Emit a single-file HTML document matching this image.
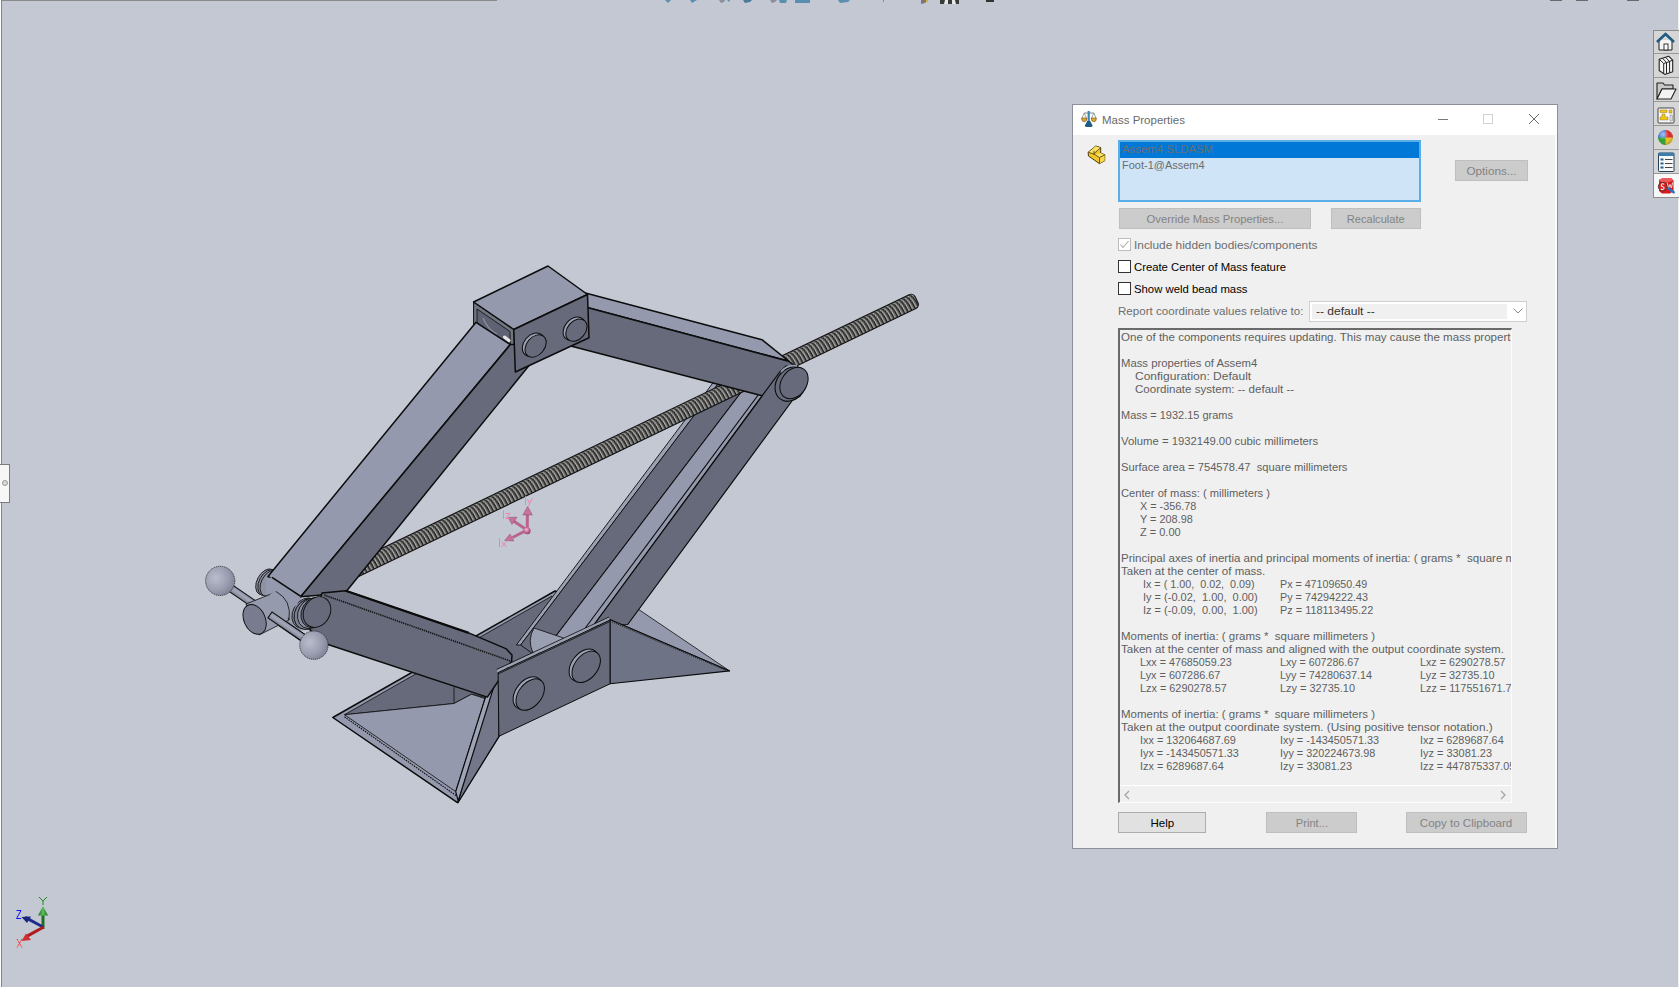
<!DOCTYPE html>
<html><head><meta charset="utf-8">
<style>
*{margin:0;padding:0;box-sizing:border-box}
html,body{width:1679px;height:987px;overflow:hidden;background:#c4c8d3;font-family:"Liberation Sans",sans-serif;position:relative}
.a{position:absolute}
.t{font-size:11px;color:#000;white-space:pre;line-height:13px;position:absolute;transform-origin:0 50%}
.m{color:#5f5f5f}
.cb{width:13px;height:13px;border:1px solid #333;background:#fff}
</style></head>
<body>
<!-- viewport decorations -->
<div class="a" style="left:0;top:0;width:497px;height:1px;background:#8a8a8a"></div>
<div class="a" style="left:0;top:0;width:1px;height:987px;background:#ffffff"></div>
<div class="a" style="left:1px;top:0;width:1px;height:987px;background:#858585"></div>
<div class="a" style="left:0;top:464px;width:10px;height:39px;background:#f7f7f7;border:1px solid #7c7c7c;border-left:none"></div>
<div class="a" style="left:2px;top:480px;width:6px;height:6px;border-radius:50%;background:#dadada;border:1px solid #999"></div>
<!-- top toolbar fragments -->
<svg class="a" style="left:0;top:0" width="1679" height="6" viewBox="0 0 1679 6">
 <path d="M665,0 L671,0 L668,3 Z" fill="#5b8fb0"/>
 <path d="M690,0 L697,0 L692,3 Z" fill="#5b8fb0"/>
 <path d="M719,0 L725,0 L724,2 L721,3 Z" fill="#8a8f99"/><path d="M727,0 L730,0 L729,2 Z" fill="#5b8fb0"/>
 <path d="M743,0 L752,0 L750,2 L745,3 Z" fill="#4a7a9c"/>
 <path d="M770,0 L777,0 L775,2 L772,3 Z" fill="#8a8f99"/><path d="M779,0 L787,0 L786,3 L780,3 Z" fill="#5b8fb0"/>
 <rect x="795" y="0" width="15" height="3" fill="#5a8db0"/>
 <path d="M838,0 L850,0 L848,2 L840,3 Z" fill="#5b8fb0"/>
 <rect x="883" y="0" width="1" height="2" fill="#888"/>
 <path d="M921,0 L928,0 L925,3 L921,4 Z" fill="#777"/><rect x="926" y="0" width="2" height="2" fill="#e0b020"/>
 <rect x="940" y="0" width="19" height="4" fill="#3a3a3a"/><path d="M945,0 L948,0 L948,4 L944,4 Z M952,0 L955,0 L956,4 L952,4 Z" fill="#e8e8e8"/>
 <rect x="986" y="0" width="8" height="2" fill="#333"/>
 <rect x="1550" y="0" width="12" height="1" fill="#6a6a6a"/>
 <rect x="1576" y="0" width="12" height="1" fill="#6a6a6a"/>
 <rect x="1627" y="0" width="12" height="1" fill="#6a6a6a"/>
</svg>
<!-- right task pane -->
<div class="a" style="left:1653px;top:30px;width:26px;height:168px;background:#d6d6d6;border:1px solid #8c8c8c;border-right:none"></div>
<div class="a" style="left:1654px;top:174px;width:25px;height:23px;background:#f7f7f7"></div>
<div class="a" style="left:1654px;top:53px;width:25px;height:1px;background:#9a9a9a"></div>
<div class="a" style="left:1654px;top:77px;width:25px;height:1px;background:#9a9a9a"></div>
<div class="a" style="left:1654px;top:101px;width:25px;height:1px;background:#9a9a9a"></div>
<div class="a" style="left:1654px;top:125px;width:25px;height:1px;background:#9a9a9a"></div>
<div class="a" style="left:1654px;top:149px;width:25px;height:1px;background:#9a9a9a"></div>
<div class="a" style="left:1654px;top:173px;width:25px;height:1px;background:#9a9a9a"></div>
<div class="a" style="left:1678px;top:0;width:1px;height:30px;background:#f0f0f0"></div>
<div class="a" style="left:1678px;top:198px;width:1px;height:789px;background:#f0f0f0"></div>
<svg class="a" style="left:1654px;top:30px" width="25" height="168" viewBox="0 0 25 168">
 <!-- home -->
 <path d="M5,10 L5,20 L18,20 L18,10" fill="#f4f4f4" stroke="#222" stroke-width="1"/>
 <rect x="10" y="14" width="4" height="6" fill="#fff" stroke="#222" stroke-width="0.9"/>
 <path d="M3,12 L11.5,4 L20,12" fill="none" stroke="#1d5a80" stroke-width="2.6"/>
 <!-- library books -->
 <path d="M5.2,29.2 L5.2,40.5 L10.7,44.4 L18.7,41.8 L18.7,30.1 L14.6,26.2 Z" fill="#f4f4f4" stroke="#222" stroke-width="1.1" stroke-linejoin="round"/>
 <path d="M9.7,33.5 L9.7,44 M12.5,32.5 L12.5,43.5 M15.6,31.5 L15.6,42.5 M5.2,29.2 L9.7,33.5 M8.5,28.2 L12.5,32.5 M11.5,27.2 L15.6,31.5 M9.7,33.5 L12.5,32.5 L15.6,31.5 L18.7,30.1" fill="none" stroke="#222" stroke-width="1"/>
 <!-- folder -->
 <path d="M3,69 L3,53 L9,53 L10.5,55 L19,55 L19,59 L8,59 Z" fill="#c8c8c8" stroke="#222" stroke-width="1.1" stroke-linejoin="round"/>
 <path d="M3,69 L8,59 L22,59 L17,69 Z" fill="#f3f3f3" stroke="#222" stroke-width="1.1" stroke-linejoin="round"/>
 <!-- design card yellow -->
 <rect x="4" y="78" width="16" height="15" rx="1" fill="#f8f8f8" stroke="#333" stroke-width="0.9"/>
 <rect x="6" y="80" width="7" height="2.5" fill="#f2c81e" stroke="#7a5c00" stroke-width="0.4"/>
 <rect x="15" y="80" width="3" height="3" fill="#f2c81e" stroke="#7a5c00" stroke-width="0.4"/>
 <path d="M8,84 L11,84 L11,87 L14,87 L14,90 L6,90 L6,87 L8,87 Z" fill="#f2c81e" stroke="#7a5c00" stroke-width="0.4"/>
 <rect x="16" y="85" width="2.5" height="6" fill="#ddd" stroke="#666" stroke-width="0.4"/>
 <!-- appearance ball -->
 <defs><clipPath id="bc"><circle cx="11.5" cy="107.5" r="7.5"/></clipPath>
 <radialGradient id="bsh" cx="0.35" cy="0.3" r="0.8"><stop offset="0" stop-color="#fff" stop-opacity="0.6"/><stop offset="0.5" stop-color="#fff" stop-opacity="0"/><stop offset="1" stop-color="#000" stop-opacity="0.35"/></radialGradient></defs>
 <g clip-path="url(#bc)">
  <rect x="3" y="99" width="9" height="9" fill="#2e6fd8"/>
  <rect x="11.5" y="99" width="9" height="9" fill="#d8262a"/>
  <rect x="3" y="107.5" width="9" height="9" fill="#2aa02a"/>
  <rect x="11.5" y="107.5" width="9" height="9" fill="#e8c020"/>
  <circle cx="11.5" cy="107.5" r="7.5" fill="url(#bsh)"/>
 </g>
 <!-- custom properties list -->
 <rect x="4.5" y="123" width="15.5" height="18.5" rx="0.8" fill="#f8f8f8" stroke="#1e3e5a" stroke-width="1"/>
 <rect x="4.5" y="123" width="15.5" height="3" fill="#3b7fb0"/>
 <rect x="6.5" y="128.5" width="3" height="2" fill="#2b5f88"/><rect x="6.5" y="132.5" width="3" height="2" fill="#2b5f88"/><rect x="6.5" y="136.5" width="3" height="2" fill="#2b5f88"/>
 <path d="M11,129.5 L18.5,129.5 M11,133.5 L18.5,133.5 M11,137.5 L18.5,137.5" stroke="#333" stroke-width="0.9"/>
 <!-- sw resources -->
 <path d="M5,150 L9,148 L17,148 L19.5,150.5 L19.5,161 L16,163.5 L8,163.5 L5,161 Z" fill="#d41c1c"/>
 <path d="M5,150 L9,148 L17,148 L19.5,150.5 L15,152 L7,152 Z" fill="#ea5a5a"/>
 <circle cx="8.6" cy="156.6" r="4.3" fill="#e01e1e" stroke="#3a3a3a" stroke-width="0.8"/>
 <path d="M10.2,154.2 Q8,153 7.3,155 Q7.2,156.5 8.8,156.8 Q10.4,157.3 9.8,158.8 Q8.8,160.2 6.8,159" fill="none" stroke="#f4f4f4" stroke-width="1.1"/>
 <path d="M13.2,152.5 L14.6,158 L16,154.5 L17.4,158 L18.6,152.5" fill="none" stroke="#e8e8e8" stroke-width="0.9"/>
 <path d="M14.5,158.5 L19.6,162.2" stroke="#2d6fc0" stroke-width="2.6" stroke-linecap="round"/>
</svg>
<!-- triad -->
<svg class="a" style="left:10px;top:890px" width="50" height="62" viewBox="10 890 50 62">
 <defs><linearGradient id="gy" x1="0" x2="1"><stop offset="0" stop-color="#1d6a1d"/><stop offset="0.5" stop-color="#5cc05c"/><stop offset="1" stop-color="#1d6a1d"/></linearGradient></defs>
 <path d="M41.5,929 L41.5,914 L44.5,914 L44.5,929 Z" fill="#1f6f1f"/>
 <path d="M38,915.5 L43,906 L48,915.5 Z" fill="url(#gy)"/>
 <path d="M42,928 L24,918.5 L26,916 L44,926 Z" fill="#1e2a8a"/>
 <path d="M21.5,917 L31,916.5 L27,923 Z" fill="#1a2580"/>
 <path d="M44,928.5 L27,938 L25,935.5 L42.5,926 Z" fill="#b01c1c"/>
 <path d="M21.5,941 L26,933.5 L31,940 Z" fill="#d03030"/>
 <path d="M39,897 L43,901 L47,897 M43,901 L43,905" fill="none" stroke="#1a8a1a" stroke-width="1"/>
 <path d="M16.5,910.5 L21,910.5 L16.5,918.5 L21,918.5" fill="none" stroke="#1010ff" stroke-width="1"/>
 <path d="M17,939 L22,947.5 M22,939 L17,947.5" fill="none" stroke="#ff1a1a" stroke-width="1" stroke-dasharray="1.2,0.6"/>
</svg>

<svg class="a" style="left:0;top:0" width="1679" height="987" viewBox="0 0 1679 987">
<polygon points="332.8,717.5 555.0,591.0 580.0,600.0 497.2,672.0 499.0,736.3 457.5,802.6" fill="#9499ad" stroke="#0c0c0c" stroke-width="1.5" stroke-linejoin="round" />
<polygon points="344.5,714.7 552.0,596.0 560.0,620.0 497.0,660.0 486.0,697.7 471.5,694.2 454.0,703.5" fill="#666a7a" stroke="#0c0c0c" stroke-width="0.8" stroke-linejoin="round" />
<line x1="454.0" y1="687.2" x2="454.0" y2="703.5" stroke="#0c0c0c" stroke-width="0.8" />
<polygon points="344.5,714.7 454.0,703.5 471.5,694.2 485.0,698.6 455.7,791.6" fill="#9499ad" stroke="#0c0c0c" stroke-width="0.8" stroke-linejoin="round" />
<polyline points="344.5,716.8 456.0,795.5" fill="none" stroke="#111" stroke-width="1.2" stroke-dasharray="1.5,1"/>
<polygon points="492.0,672.0 499.0,672.6 499.0,736.3 458.0,802.6" fill="#737789" stroke="#0c0c0c" stroke-width="1.2" stroke-linejoin="round" />
<polygon points="492.9,673.6 497.9,673.6 458.2,801.0 455.7,791.6" fill="#9ea3b6" stroke="#0c0c0c" stroke-width="1.2" stroke-linejoin="round" />
<polygon points="600.0,604.0 637.5,608.7 729.6,670.9 610.0,619.6" fill="#9499ad" stroke="#0c0c0c" stroke-width="0.8" stroke-linejoin="round" />
<polygon points="495.0,655.0 600.0,610.0 610.0,640.0 500.0,690.0" fill="#666a7a" stroke="#0c0c0c" stroke-width="0" stroke-linejoin="round" />
<polygon points="722.6,370.0 728.5,370.0 520.6,645.0 516.4,645.0" fill="#9ba0b3" stroke="#0c0c0c" stroke-width="0.9" stroke-linejoin="round" />
<polygon points="728.5,370.0 758.0,370.0 557.4,634.0 532.8,653.7 520.6,645.0" fill="#666a7a" stroke="#0c0c0c" stroke-width="0.9" stroke-linejoin="round" />
<polygon points="758.0,370.0 781.1,370.0 568.1,660.0 537.6,660.0" fill="#9499ad" stroke="#0c0c0c" stroke-width="1.1" stroke-linejoin="round" />
<line x1="776.7" y1="370.0" x2="585.3" y2="628.0" stroke="#0c0c0c" stroke-width="1.1" />
<path d="M534,628 L563.3,637.9 L556,652 L533,653 Q527,640 534,628 Z" fill="#9a9fb2" stroke="#0c0c0c" stroke-width="0.8"/>
<defs><pattern id="thr" x="0" y="-7.7" width="3.9" height="15.4" patternUnits="userSpaceOnUse"><rect width="3.9" height="15.4" fill="#5a5a5a"/><path d="M-11.70,-0.5 Q-6.20,-0.5 -6.20,15.9" fill="none" stroke="#1a1a1a" stroke-width="1.35"/><path d="M-10.45,-0.5 Q-4.95,-0.5 -4.95,15.9" fill="none" stroke="#b8b8b4" stroke-width="1.2"/><path d="M-7.80,-0.5 Q-2.30,-0.5 -2.30,15.9" fill="none" stroke="#1a1a1a" stroke-width="1.35"/><path d="M-6.55,-0.5 Q-1.05,-0.5 -1.05,15.9" fill="none" stroke="#b8b8b4" stroke-width="1.2"/><path d="M-3.90,-0.5 Q1.60,-0.5 1.60,15.9" fill="none" stroke="#1a1a1a" stroke-width="1.35"/><path d="M-2.65,-0.5 Q2.85,-0.5 2.85,15.9" fill="none" stroke="#b8b8b4" stroke-width="1.2"/><path d="M0.00,-0.5 Q5.50,-0.5 5.50,15.9" fill="none" stroke="#1a1a1a" stroke-width="1.35"/><path d="M1.25,-0.5 Q6.75,-0.5 6.75,15.9" fill="none" stroke="#b8b8b4" stroke-width="1.2"/><path d="M3.90,-0.5 Q9.40,-0.5 9.40,15.9" fill="none" stroke="#1a1a1a" stroke-width="1.35"/><path d="M5.15,-0.5 Q10.65,-0.5 10.65,15.9" fill="none" stroke="#b8b8b4" stroke-width="1.2"/></pattern></defs>
<g transform="translate(345.0,574.6) rotate(-25.69)"><rect x="0" y="-7.7" width="634.2" height="15.4" rx="4.5" fill="url(#thr)" stroke="#111" stroke-width="1.1"/></g>
<polygon points="575.0,290.3 762.0,339.7 764.7,341.9 788.5,361.0 575.0,304.2" fill="#9499ad" stroke="#0c0c0c" stroke-width="1.5" stroke-linejoin="round" />
<polygon points="575.0,304.2 788.5,361.2 803.0,372.0 800.0,396.0 790.0,401.0 759.2,395.0 571.6,346.2" fill="#666a7a" stroke="#0c0c0c" stroke-width="1.5" stroke-linejoin="round" />
<polygon points="779.7,372.0 786.0,366.0 800.0,368.0 806.0,380.0 796.4,395.0 627.7,624.5 593.1,626.0" fill="#666a7a" stroke="#0c0c0c" stroke-width="1.2" stroke-linejoin="round" />
<ellipse cx="791" cy="384" rx="14.5" ry="18.5" transform="rotate(35 791 384)" fill="#666a7a" stroke="#0c0c0c" stroke-width="1.1"/>
<ellipse cx="794" cy="383" rx="12.5" ry="17" transform="rotate(35 794 383)" fill="#666a7a" stroke="#0c0c0c" stroke-width="1"/>
<path d="M781,372 Q787,364 797,366" fill="none" stroke="#9ba0b3" stroke-width="1.6"/>
<polygon points="610.0,619.6 729.6,670.9 610.0,683.8" fill="#6f7386" stroke="#0c0c0c" stroke-width="1.1" stroke-linejoin="round" />
<polyline points="612.0,621.8 726.0,670.4" fill="none" stroke="#222" stroke-width="1" stroke-dasharray="1.2,1"/>
<polygon points="473.6,302.0 513.8,329.5 515.3,372.0 473.6,346.0" fill="#70747f" stroke="#0c0c0c" stroke-width="1" stroke-linejoin="round" />
<polygon points="477.0,309.0 510.0,331.5 511.0,367.0 477.0,345.0" fill="#5e6272" stroke="#0c0c0c" stroke-width="0.8" stroke-linejoin="round" />
<path d="M483,318 Q488,330 497,334" fill="none" stroke="#8d92a3" stroke-width="1.2"/>
<path d="M504.5,337 L509,340.5" stroke="#e6e6e6" stroke-width="3" stroke-linecap="round"/>
<ellipse cx="266" cy="582.0" rx="9" ry="14" transform="rotate(28 266 582)" fill="#8d92a5" stroke="#0c0c0c" stroke-width="0.8"/>
<ellipse cx="268.5" cy="582.75" rx="9" ry="14" transform="rotate(28 268.5 582)" fill="#8d92a5" stroke="#0c0c0c" stroke-width="0.8"/>
<ellipse cx="271" cy="583.5" rx="9" ry="14" transform="rotate(28 271 582)" fill="#8d92a5" stroke="#0c0c0c" stroke-width="0.8"/>
<polygon points="284.0,596.0 301.0,597.0 306.0,630.0 288.0,632.0" fill="#959aad" stroke="#0c0c0c" stroke-width="0" stroke-linejoin="round" />
<ellipse cx="305" cy="613.0" rx="12" ry="16" transform="rotate(30 305 613)" fill="#8d92a5" stroke="#0c0c0c" stroke-width="0.8"/>
<ellipse cx="307.5" cy="613.5" rx="12" ry="16" transform="rotate(30 307.5 613)" fill="#8d92a5" stroke="#0c0c0c" stroke-width="0.8"/>
<ellipse cx="310" cy="614.0" rx="12" ry="16" transform="rotate(30 310 613)" fill="#8d92a5" stroke="#0c0c0c" stroke-width="0.8"/>
<ellipse cx="312.5" cy="614.5" rx="12" ry="16" transform="rotate(30 312.5 613)" fill="#8d92a5" stroke="#0c0c0c" stroke-width="0.8"/>
<polygon points="476.0,322.3 510.3,344.6 300.7,596.7 268.0,576.5" fill="#9499ad" stroke="#0c0c0c" stroke-width="1.5" stroke-linejoin="round" />
<polygon points="510.3,344.6 546.0,344.6 345.0,593.0 300.7,596.7" fill="#666a7a" stroke="#0c0c0c" stroke-width="1.5" stroke-linejoin="round" />
<polygon points="266.0,578.0 272.0,577.4 300.4,596.2 297.0,605.0 289.0,610.0 266.0,593.0" fill="#9499ad" stroke="#0c0c0c" stroke-width="0" stroke-linejoin="round" />
<line x1="272.0" y1="577.4" x2="300.4" y2="596.2" stroke="#0c0c0c" stroke-width="1.6" />
<polygon points="548.0,266.0 473.6,302.0 513.8,329.5 587.5,294.5" fill="#9499ad" stroke="#0c0c0c" stroke-width="1.5" stroke-linejoin="round" />
<polygon points="513.8,329.5 587.5,294.5 589.0,337.8 515.3,372.0" fill="#666a7a" stroke="#0c0c0c" stroke-width="1.5" stroke-linejoin="round" />
<ellipse cx="533.4" cy="344.59999999999997" rx="9.5" ry="13" transform="rotate(40 533.4 344.59999999999997)" fill="#9ba0b3" stroke="#0c0c0c" stroke-width="1"/>
<ellipse cx="535.6" cy="346.0" rx="9" ry="12.5" transform="rotate(40 535.6 346.0)" fill="#666a7a" stroke="#0c0c0c" stroke-width="1"/>
<ellipse cx="574.1999999999999" cy="328.7" rx="9.5" ry="13" transform="rotate(40 574.1999999999999 328.7)" fill="#9ba0b3" stroke="#0c0c0c" stroke-width="1"/>
<ellipse cx="576.4" cy="330.1" rx="9" ry="12.5" transform="rotate(40 576.4 330.1)" fill="#666a7a" stroke="#0c0c0c" stroke-width="1"/>
<polygon points="322.0,593.0 345.7,590.7 468.7,632.9 505.8,648.6 512.0,655.0 511.6,661.5 487.3,697.1 327.2,644.3 310.0,630.0" fill="#666a7a" stroke="#0c0c0c" stroke-width="1.5" stroke-linejoin="round" />
<polyline points="324.3,595.0 511.6,661.5" fill="none" stroke="#111" stroke-width="1.6" stroke-dasharray="1.3,0.9"/>
<line x1="345.7" y1="590.7" x2="468.7" y2="632.9" stroke="#0c0c0c" stroke-width="2.2" />
<ellipse cx="309" cy="614.4" rx="13" ry="16" transform="rotate(30 309 612)" fill="#7c8092" stroke="#0c0c0c" stroke-width="0.8"/>
<ellipse cx="312" cy="613.5" rx="13" ry="16" transform="rotate(30 312 612)" fill="#8a8fa2" stroke="#0c0c0c" stroke-width="0.8"/>
<ellipse cx="315" cy="612.6" rx="13" ry="16" transform="rotate(30 315 612)" fill="#666a7a" stroke="#0c0c0c" stroke-width="0.8"/>
<ellipse cx="317" cy="612" rx="13" ry="16" transform="rotate(30 317 612)" fill="#666a7a" stroke="#0c0c0c" stroke-width="0.9"/>
<defs><radialGradient id="ball" cx="0.35" cy="0.4" r="0.7"><stop offset="0" stop-color="#b9bdcc"/><stop offset="0.6" stop-color="#9a9eb0"/><stop offset="1" stop-color="#7d8194"/></radialGradient><linearGradient id="cyl" x1="0" y1="0" x2="0" y2="1"><stop offset="0" stop-color="#8f94a7"/><stop offset="0.45" stop-color="#a3a7b8"/><stop offset="1" stop-color="#7b8092"/></linearGradient></defs>
<g transform="translate(220.2,580.9) rotate(34.46)"><rect x="0" y="-3.6" width="113.6" height="7.2" fill="url(#cyl)" stroke="#111" stroke-width="1.1"/></g>
<path d="M246,604 L276,592 L289,620 L259,635 Z" fill="#959aad" stroke="#0c0c0c" stroke-width="0.8"/>
<ellipse cx="279" cy="606" rx="10.5" ry="15" transform="rotate(-25 279 606)" fill="#959aad" stroke="none"/>
<path d="M276,591.5 Q292,600 289,620" fill="none" stroke="#0c0c0c" stroke-width="0.8"/>
<ellipse cx="254.6" cy="619.4" rx="10.6" ry="15.6" transform="rotate(-25 254.6 619.4)" fill="#787c8e" stroke="#0c0c0c" stroke-width="0.9"/>
<g transform="translate(270,615) rotate(34.46)"><rect x="0" y="-3.6" width="58.6" height="7.2" fill="url(#cyl)" stroke="#111" stroke-width="1.1"/></g>
<circle cx="220.2" cy="580.9" r="14.6" fill="url(#ball)" stroke="#222" stroke-width="0.8" stroke-dasharray="1.2,0.8"/>
<circle cx="313.9" cy="645.2" r="14.2" fill="url(#ball)" stroke="#222" stroke-width="0.8" stroke-dasharray="1.2,0.8"/>
<polygon points="498.1,672.6 610.0,620.1 610.0,683.8 498.9,736.3" fill="#666a7a" stroke="#0c0c0c" stroke-width="1" stroke-linejoin="round" />
<line x1="497.0" y1="671.0" x2="609.0" y2="618.3" stroke="#9ba0b3" stroke-width="2.5" />
<line x1="496.5" y1="669.5" x2="609.0" y2="617.0" stroke="#0c0c0c" stroke-width="0.8" />
<line x1="498.0" y1="674.0" x2="610.0" y2="621.5" stroke="#0c0c0c" stroke-width="0.8" />
<ellipse cx="527.8" cy="693.0" rx="12" ry="18.3" transform="rotate(38 527.8 693.0)" fill="#9ba0b3" stroke="#0c0c0c" stroke-width="1"/>
<ellipse cx="530.2" cy="694.5999999999999" rx="11.5" ry="17.8" transform="rotate(38 530.2 694.5999999999999)" fill="#666a7a" stroke="#0c0c0c" stroke-width="1"/>
<ellipse cx="583.8" cy="665.2" rx="12" ry="18.3" transform="rotate(38 583.8 665.2)" fill="#9ba0b3" stroke="#0c0c0c" stroke-width="1"/>
<ellipse cx="586.2" cy="666.8" rx="11.5" ry="17.8" transform="rotate(38 586.2 666.8)" fill="#666a7a" stroke="#0c0c0c" stroke-width="1"/>
<defs><radialGradient id="cm" cx="0.4" cy="0.35" r="0.7"><stop offset="0" stop-color="#f6c0e0"/><stop offset="0.5" stop-color="#c8709c"/><stop offset="1" stop-color="#8a4068"/></radialGradient></defs>
<g stroke="#b8648e" stroke-width="3" stroke-linecap="butt">
<line x1="527.2" y1="530" x2="527.4" y2="514"/>
<line x1="527" y1="530" x2="512" y2="520"/>
<line x1="527" y1="530" x2="512.5" y2="537.5"/>
</g>
<g fill="#c8729e" stroke="#7a3a5c" stroke-width="0.4">
<path d="M522.8,515 L527.7,506.4 L532.3,515 Z"/>
<path d="M508.2,517.4 L517,517.2 L512,524.5 Z"/>
<path d="M504.6,540.5 L510,534 L513.8,541 Z"/>
</g>
<circle cx="527.1" cy="530.7" r="3.5" fill="url(#cm)"/>
<g fill="none" stroke="#f07ab8" stroke-width="0.9">
<path d="M525.5,496 L525.5,505 M527.5,499 L529.5,503.5 L532.5,498 M529.5,503.5 L528.5,506"/>
<path d="M503.5,510 L503.5,519 M505.5,513.5 L510,513.5 L505.5,518.5 L510,518.5"/>
<path d="M499.5,538 L499.5,547 M501.5,541.5 L506.5,547 M506.5,541.5 L501.5,547"/>
</g>
</svg>
<!-- ================= DIALOG ================= -->
<div class="a" style="left:1072px;top:104px;width:486px;height:745px;background:#8b9099"></div>
<div class="a" style="left:1073px;top:105px;width:484px;height:743px;background:#f0f0f0"></div>
<div class="a" style="left:1073px;top:105px;width:484px;height:30px;background:#fff"></div>
<div class="a" style="left:1555px;top:135px;width:2px;height:713px;background:#fafafa"></div>
<svg class="a" style="left:1065px;top:98px" width="45" height="35" viewBox="1065 98 45 35">
 <path d="M1082,118 L1084.2,113 L1086.4,118 M1091.6,118 L1093.8,113 L1096,118" fill="none" stroke="#7a7a7a" stroke-width="0.7"/>
 <path d="M1084.2,113 L1093.8,113" stroke="#5a6a78" stroke-width="0.8"/>
 <path d="M1081.6,118 L1086.9,118 Q1086.9,121.8 1084.2,121.8 Q1081.6,121.8 1081.6,118 Z" fill="#e3a52a" stroke="#6a5020" stroke-width="0.6"/>
 <path d="M1091.2,118 L1096.4,118 Q1096.4,121.8 1093.8,121.8 Q1091.2,121.8 1091.2,118 Z" fill="#e3a52a" stroke="#6a5020" stroke-width="0.6"/>
 <rect x="1087.6" y="111" width="2.2" height="11.5" fill="#3a88b5"/>
 <path d="M1087.2,121 L1090.2,121 L1092.5,125.5 Q1092.8,126.9 1091,126.9 L1086.4,126.9 Q1084.6,126.9 1084.9,125.5 Z" fill="#1f5c84"/>
</svg>
<div class="a" style="left:1438px;top:119px;width:10px;height:1px;background:#7a7a7a"></div>
<div class="a" style="left:1483px;top:114px;width:10px;height:10px;border:1px solid #d2d2d2"></div>
<svg class="a" style="left:1529px;top:114px" width="10" height="10" viewBox="0 0 10 10"><path d="M0 0 L10 10 M10 0 L0 10" stroke="#6a6a6a" stroke-width="1"/></svg>
<svg class="a" style="left:1080px;top:140px" width="30" height="30" viewBox="1080 140 30 30">
 <path d="M1088.1,152.3 L1095.8,146 L1100.7,147.6 L1100.7,153.1 L1104.7,154.7 L1104.7,160.8 L1099.4,163.6 L1088.5,156 Z" fill="#f2c62a" stroke="#4a3a08" stroke-width="1"/>
 <path d="M1088.6,152.2 L1095.8,146.3 L1100.3,147.8 L1093.5,153.8 Z" fill="#f9e26a"/>
 <path d="M1095.2,154.8 L1100.7,153.1 L1104.4,154.8 L1099.6,157.6 Z" fill="#f9e26a"/>
 <path d="M1099.6,157.6 L1104.6,155 L1104.6,160.8 L1099.4,163.4 Z" fill="#f7d84a"/>
 <path d="M1088.4,152.3 L1094,154.2 L1094,150.8 M1094,154.2 L1099.6,157.6 L1104.7,154.7 M1099.6,157.6 L1099.4,163.6 M1093.8,153.8 L1100.5,147.8" fill="none" stroke="#4a3a08" stroke-width="0.8"/>
</svg>
<div class="a" style="left:1118px;top:140px;width:303px;height:62px;background:#cfe4f7;border:2px solid #5aade6"></div>
<div class="a" style="left:1120px;top:142px;width:299px;height:16px;background:#0078d7"></div>
<div class="a cb" style="left:1118px;top:238px;border-color:#bcbcbc"></div>
<svg class="a" style="left:1118px;top:238px" width="13" height="13" viewBox="0 0 13 13"><path d="M2.5 6.5 L5 9.5 L10.5 3" fill="none" stroke="#a8a8a8" stroke-width="1.1"/></svg>
<div class="a cb" style="left:1118px;top:260px"></div>
<div class="a cb" style="left:1118px;top:282px"></div>
<div class="a" style="left:1309px;top:301px;width:218px;height:21px;border:1px solid #cfcfcf;background:#fff"></div>
<div class="a" style="left:1312px;top:304px;width:195px;height:15px;background:#f0f0f0"></div>
<svg class="a" style="left:1513px;top:308px" width="10" height="6" viewBox="0 0 10 6"><path d="M0.5 0.5 L5 5 L9.5 0.5" fill="none" stroke="#8a8a8a" stroke-width="1"/></svg>
<div class="a" style="left:1118px;top:328px;width:394px;height:475px;background:#f0f0f0;border-top:2px solid #6a6a6a;border-left:2px solid #6a6a6a;border-right:1px solid #fcfcfc;border-bottom:1px solid #fcfcfc;overflow:hidden">
<div class="a" style="left:0;top:0;width:391px;height:455px;overflow:hidden">
<div class="t m" style="left:1px;top:1px;transform:scaleX(1.050)">One of the components requires updating. This may cause the mass properties to be inaccurate.</div>
<div class="t m" style="left:1px;top:27px;transform:scaleX(1.027)">Mass properties of Assem4</div>
<div class="t m" style="left:15px;top:40px;transform:scaleX(1.092)">Configuration: Default</div>
<div class="t m" style="left:15px;top:53px;transform:scaleX(1.050)">Coordinate system: -- default --</div>
<div class="t m" style="left:1px;top:79px;transform:scaleX(0.998)">Mass = 1932.15 grams</div>
<div class="t m" style="left:1px;top:105px;transform:scaleX(1.029)">Volume = 1932149.00 cubic millimeters</div>
<div class="t m" style="left:1px;top:131px;transform:scaleX(1.016)">Surface area = 754578.47  square millimeters</div>
<div class="t m" style="left:1px;top:157px;transform:scaleX(1.016)">Center of mass: ( millimeters )</div>
<div class="t m" style="left:20px;top:170px;transform:scaleX(0.986)">X = -356.78</div>
<div class="t m" style="left:20px;top:183px;transform:scaleX(0.990)">Y = 208.98</div>
<div class="t m" style="left:20px;top:196px;transform:scaleX(1.000)">Z = 0.00</div>
<div class="t m" style="left:1px;top:222px;transform:scaleX(1.050)">Principal axes of inertia and principal moments of inertia: ( grams *  square millimeters )</div>
<div class="t m" style="left:1px;top:235px;transform:scaleX(1.044)">Taken at the center of mass.</div>
<div class="t m" style="left:23px;top:248px;transform:scaleX(0.979)">Ix = ( 1.00,  0.02,  0.09)</div>
<div class="t m" style="left:160px;top:248px;transform:scaleX(0.972)">Px = 47109650.49</div>
<div class="t m" style="left:23px;top:261px;transform:scaleX(1.000)">Iy = (-0.02,  1.00,  0.00)</div>
<div class="t m" style="left:160px;top:261px;transform:scaleX(0.981)">Py = 74294222.43</div>
<div class="t m" style="left:23px;top:274px;transform:scaleX(1.000)">Iz = (-0.09,  0.00,  1.00)</div>
<div class="t m" style="left:160px;top:274px;transform:scaleX(0.991)">Pz = 118113495.22</div>
<div class="t m" style="left:1px;top:300px;transform:scaleX(1.044)">Moments of inertia: ( grams *  square millimeters )</div>
<div class="t m" style="left:1px;top:313px;transform:scaleX(1.049)">Taken at the center of mass and aligned with the output coordinate system.</div>
<div class="t m" style="left:20px;top:326px;transform:scaleX(0.976)">Lxx = 47685059.23</div>
<div class="t m" style="left:160px;top:326px;transform:scaleX(0.969)">Lxy = 607286.67</div>
<div class="t m" style="left:300px;top:326px;transform:scaleX(0.975)">Lxz = 6290278.57</div>
<div class="t m" style="left:20px;top:339px;transform:scaleX(0.990)">Lyx = 607286.67</div>
<div class="t m" style="left:160px;top:339px;transform:scaleX(0.985)">Lyy = 74280637.14</div>
<div class="t m" style="left:300px;top:339px;transform:scaleX(0.993)">Lyz = 32735.10</div>
<div class="t m" style="left:20px;top:352px;transform:scaleX(0.988)">Lzx = 6290278.57</div>
<div class="t m" style="left:160px;top:352px;transform:scaleX(0.993)">Lzy = 32735.10</div>
<div class="t m" style="left:300px;top:352px;transform:scaleX(0.983)">Lzz = 117551671.75</div>
<div class="t m" style="left:1px;top:378px;transform:scaleX(1.044)">Moments of inertia: ( grams *  square millimeters )</div>
<div class="t m" style="left:1px;top:391px;transform:scaleX(1.072)">Taken at the output coordinate system. (Using positive tensor notation.)</div>
<div class="t m" style="left:20px;top:404px;transform:scaleX(0.988)">Ixx = 132064687.69</div>
<div class="t m" style="left:160px;top:404px;transform:scaleX(0.984)">Ixy = -143450571.33</div>
<div class="t m" style="left:300px;top:404px;transform:scaleX(0.988)">Ixz = 6289687.64</div>
<div class="t m" style="left:20px;top:417px;transform:scaleX(0.982)">Iyx = -143450571.33</div>
<div class="t m" style="left:160px;top:417px;transform:scaleX(0.983)">Iyy = 320224673.98</div>
<div class="t m" style="left:300px;top:417px;transform:scaleX(0.993)">Iyz = 33081.23</div>
<div class="t m" style="left:20px;top:430px;transform:scaleX(0.988)">Izx = 6289687.64</div>
<div class="t m" style="left:160px;top:430px;transform:scaleX(0.993)">Izy = 33081.23</div>
<div class="t m" style="left:300px;top:430px;transform:scaleX(0.983)">Izz = 447875337.05</div>
</div>
<div class="a" style="left:0;top:455px;width:391px;height:1px;background:#fff"></div>
<svg class="a" style="left:3px;top:460px" width="8" height="10" viewBox="0 0 8 10"><path d="M6 1 L2 5 L6 9" fill="none" stroke="#a6a6a6" stroke-width="1.4"/></svg>
<svg class="a" style="left:379px;top:460px" width="8" height="10" viewBox="0 0 8 10"><path d="M2 1 L6 5 L2 9" fill="none" stroke="#a6a6a6" stroke-width="1.4"/></svg>
</div>
<div class="a t" style="left:1102px;top:114px;color:#6a6a6a;transform:scaleX(1.044);">Mass Properties</div>
<div class="a t" style="left:1122px;top:143px;color:#6d6d6d;transform:scaleX(1.035);">Assem4.SLDASM</div>
<div class="a t" style="left:1122px;top:159px;color:#6d6d6d;transform:scaleX(0.999);">Foot-1@Assem4</div>
<div class="a" style="left:1455px;top:160px;width:73px;height:21px;background:#cccccc;border:1px solid #bfbfbf"></div><div class="a t" style="left:1455px;top:165px;width:73px;text-align:center;color:#838383"><span style="display:inline-block;transform:scaleX(1.066)">Options...</span></div>
<div class="a" style="left:1119px;top:208px;width:192px;height:21px;background:#cccccc;border:1px solid #bfbfbf"></div><div class="a t" style="left:1119px;top:213px;width:192px;text-align:center;color:#838383"><span style="display:inline-block;transform:scaleX(1.022)">Override Mass Properties...</span></div>
<div class="a" style="left:1331px;top:208px;width:90px;height:21px;background:#cccccc;border:1px solid #bfbfbf"></div><div class="a t" style="left:1331px;top:213px;width:90px;text-align:center;color:#838383"><span style="display:inline-block;transform:scaleX(1.005)">Recalculate</span></div>
<div class="a t" style="left:1134px;top:239px;color:#6d6d6d;transform:scaleX(1.079);">Include hidden bodies/components</div>
<div class="a t" style="left:1134px;top:261px;color:#000;transform:scaleX(1.027);">Create Center of Mass feature</div>
<div class="a t" style="left:1134px;top:283px;color:#000;transform:scaleX(1.031);">Show weld bead mass</div>
<div class="a t" style="left:1118px;top:305px;color:#6d6d6d;transform:scaleX(1.053);">Report coordinate values relative to:</div>
<div class="a t" style="left:1316px;top:305px;color:#333;transform:scaleX(1.093);">-- default --</div>
<div class="a" style="left:1118px;top:812px;width:88px;height:21px;background:#e1e1e1;border:1px solid #adadad"></div><div class="a t" style="left:1118px;top:817px;width:88px;text-align:center;color:#000"><span style="display:inline-block;transform:scaleX(1.050)">Help</span></div>
<div class="a" style="left:1266px;top:812px;width:91px;height:21px;background:#cccccc;border:1px solid #bfbfbf"></div><div class="a t" style="left:1266px;top:817px;width:91px;text-align:center;color:#838383"><span style="display:inline-block;transform:scaleX(1.012)">Print...</span></div>
<div class="a" style="left:1406px;top:812px;width:121px;height:21px;background:#cccccc;border:1px solid #bfbfbf"></div><div class="a t" style="left:1406px;top:817px;width:121px;text-align:center;color:#838383"><span style="display:inline-block;transform:scaleX(1.050)">Copy to Clipboard</span></div>

</body></html>
